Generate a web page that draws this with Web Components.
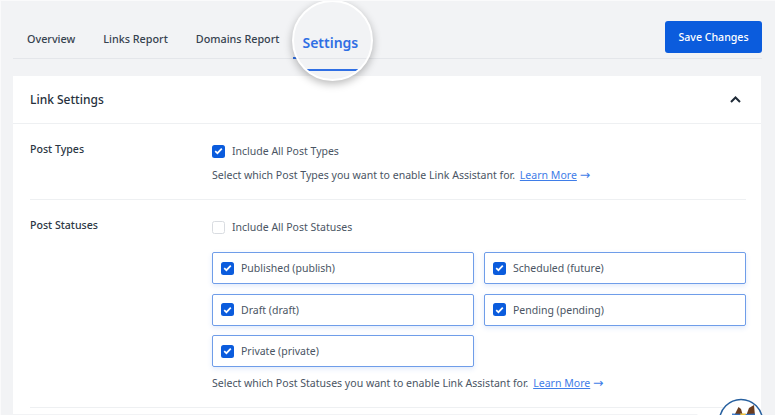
<!DOCTYPE html>
<html>
<head>
<meta charset="utf-8">
<title>Link Assistant Settings</title>
<style>
  html, body { margin: 0; height: 100%; overflow: hidden; }
  body {
    background: #f2f3f5;
    font-family: "Noto Sans", "Open Sans", sans-serif;
    color: #3c4858;
  }
</style>
</head>
<body>
<la-page>
  <la-tabs slot="tabs">
    <la-tab>Overview</la-tab>
    <la-tab>Links Report</la-tab>
    <la-tab>Domains Report</la-tab>
    <la-tab active><la-lens>Settings</la-lens></la-tab>
    <la-button slot="action">Save Changes</la-button>
  </la-tabs>
  <la-card heading="Link Settings">
    <la-row label="Post Types">
      <la-check checked>Include All Post Types</la-check>
      <la-help type="Post Types"></la-help>
    </la-row>
    <la-row label="Post Statuses">
      <la-check>Include All Post Statuses</la-check>
      <la-options>
        <la-check boxed checked>Published (publish)</la-check>
        <la-check boxed checked>Scheduled (future)</la-check>
        <la-check boxed checked>Draft (draft)</la-check>
        <la-check boxed checked>Pending (pending)</la-check>
        <la-check boxed checked>Private (private)</la-check>
      </la-options>
      <la-help type="Post Statuses"></la-help>
    </la-row>
  </la-card>
  <la-mascot></la-mascot>
</la-page>

<script>
  class LaPage extends HTMLElement {
    connectedCallback() {
      this.attachShadow({ mode: "open" });
      this.shadowRoot.innerHTML = `
        <style>
          :host {
            display: block;
            position: relative;
            width: 775px;
            height: 415px;
            box-sizing: border-box;
            padding: 0 13px 0 12px;
            overflow: hidden;
            border-top: 1px solid #fafafb;
            border-left: 1px solid #fafafb;
          }
        </style>
        <slot name="tabs"></slot>
        <slot></slot>
      `;
    }
  }

  class LaTabs extends HTMLElement {
    connectedCallback() {
      this.attachShadow({ mode: "open" });
      this.shadowRoot.innerHTML = `
        <style>
          :host {
            display: flex;
            align-items: flex-start;
            justify-content: space-between;
            height: 57px;
            margin: 0 0 17px;
            border-bottom: 1px solid #e4e6ea;
          }
          nav { display: flex; align-self: stretch; }
        </style>
        <nav><slot></slot></nav>
        <slot name="action"></slot>
      `;
    }
  }

  class LaTab extends HTMLElement {
    connectedCallback() {
      this.attachShadow({ mode: "open" });
      this.shadowRoot.innerHTML = `
        <style>
          :host {
            display: block;
            position: relative;
            box-sizing: border-box;
            height: 58px;
            padding: 29px 14px 0;
            font-size: 10.8px;
            line-height: 17px;
            font-weight: 500;
            color: #36424f;
            white-space: nowrap;
          }
          :host([active]) {
            width: 70px;
            padding: 0;
            border-bottom: 2px solid #2f6fe4;
          }
        </style>
        <slot></slot>
      `;
    }
  }

  class LaButton extends HTMLElement {
    connectedCallback() {
      this.attachShadow({ mode: "open" });
      this.shadowRoot.innerHTML = `
        <style>
          :host {
            display: flex;
            align-items: center;
            justify-content: center;
            width: 97px;
            height: 32px;
            margin-top: 20px;
            border-radius: 3px;
            background: #0b5cdd;
            color: #fff;
            font-size: 10.6px;
            font-weight: 500;
          }
        </style>
        <slot></slot>
      `;
    }
  }

  class LaCard extends HTMLElement {
    connectedCallback() {
      this.attachShadow({ mode: "open" });
      this.shadowRoot.innerHTML = `
        <style>
          :host {
            display: block;
            background: #fff;
            width: 748px;
            height: 338px;
            overflow: hidden;
          }
          header {
            display: flex;
            align-items: center;
            justify-content: space-between;
            height: 47px;
            padding: 0 20px 0 17px;
            border-bottom: 1px solid #eef0f2;
            font-size: 12px;
            font-weight: 500;
            color: #26303c;
          }
          svg { display: block; }
          .body { padding: 0 15px 0 17px; }
        </style>
        <header>
          <span>${this.getAttribute("heading")}</span>
          <svg width="11" height="7" viewBox="0 0 11 7"><path d="M1 6 5.5 1.5 10 6" fill="none" stroke="#1f2a37" stroke-width="2"/></svg>
        </header>
        <div class="body"><slot></slot></div>
      `;
    }
  }

  class LaRow extends HTMLElement {
    connectedCallback() {
      this.attachShadow({ mode: "open" });
      this.shadowRoot.innerHTML = `
        <style>
          :host {
            display: grid;
            grid-template-columns: 182px 1fr;
            padding: 19px 0 16px;
            border-bottom: 1px solid #eef0f2;
          }
          .label {
            font-size: 10.6px;
            line-height: 12px;
            font-weight: 500;
            color: #2c3744;
          }
          .controls { display: flex; flex-direction: column; }
        </style>
        <div class="label">${this.getAttribute("label")}</div>
        <div class="controls"><slot></slot></div>
      `;
    }
  }

  class LaCheck extends HTMLElement {
    connectedCallback() {
      const checked = this.hasAttribute("checked");
      this.attachShadow({ mode: "open" });
      this.shadowRoot.innerHTML = `
        <style>
          :host {
            display: flex;
            align-items: center;
            gap: 7px;
            height: 16px;
            font-size: 10.5px;
            line-height: 16px;
            color: #4a5564;
            white-space: nowrap;
          }
          :host([boxed]) {
            box-sizing: border-box;
            height: 32px;
            padding-left: 8px;
            border: 1px solid #6f9de9;
            border-radius: 2px;
            box-shadow: 0 2px 5px rgba(70, 125, 230, .16);
          }
          .box {
            box-sizing: border-box;
            width: 13px;
            height: 13px;
            flex: none;
            border-radius: 2.5px;
            display: flex;
            align-items: center;
            justify-content: center;
          }
          .on { background: #0b5cdd; }
          .off { background: #fff; border: 1px solid #d9dce1; }
        </style>
        <span class="box ${checked ? "on" : "off"}">${checked ? `<svg width="9" height="8" viewBox="0 0 9 8"><path d="M1.2 4.2 3.4 6.2 7.8 1.6" fill="none" stroke="#fff" stroke-width="1.7"/></svg>` : ""}</span>
        <span><slot></slot></span>
      `;
    }
  }

  class LaOptions extends HTMLElement {
    connectedCallback() {
      this.attachShadow({ mode: "open" });
      this.shadowRoot.innerHTML = `
        <style>
          :host {
            display: grid;
            grid-template-columns: 262px 262px;
            gap: 9.5px 10px;
            margin-top: 17px;
          }
        </style>
        <slot></slot>
      `;
    }
  }

  class LaHelp extends HTMLElement {
    connectedCallback() {
      this.attachShadow({ mode: "open" });
      this.shadowRoot.innerHTML = `
        <style>
          :host {
            display: block;
            height: 16px;
            margin-top: 8px;
            font-size: 10.55px;
            line-height: 16px;
            color: #4a5564;
            white-space: nowrap;
          }
          a { color: #3f7de8; text-decoration: underline; margin-left: 2px; }
          span { color: #3f7de8; font-family: "DejaVu Sans", sans-serif; font-size: 12.5px; line-height: 1; }
        </style>
        Select which ${this.getAttribute("type")} you want to enable Link Assistant for. <a>Learn More</a> <span>→</span>
      `;
    }
  }

  class LaLens extends HTMLElement {
    connectedCallback() {
      this.attachShadow({ mode: "open" });
      this.shadowRoot.innerHTML = `
        <style>
          :host {
            position: absolute;
            left: -1px;
            top: -1px;
            box-sizing: border-box;
            width: 81px;
            height: 81px;
            border-radius: 50%;
            overflow: hidden;
            background: #f2f3f5;
            border: 2px solid #fff;
            box-shadow: 0 3px 9px rgba(0, 0, 0, .28);
          }
          span {
            position: absolute;
            left: 8px;
            top: 30px;
            font-size: 14px;
            line-height: 22px;
            font-weight: 600;
            color: #2f6fe4;
          }
          i { position: absolute; left: 13px; right: 13px; top: 67px; height: 2px; background: #2f6fe4; }
          b { position: absolute; left: 0; right: 0; top: 56px; height: 1px; background: #e4e6ea; }
        </style>
        <b></b><span><slot></slot></span><i></i>
      `;
    }
  }

  class LaMascot extends HTMLElement {
    connectedCallback() {
      this.attachShadow({ mode: "open" });
      this.shadowRoot.innerHTML = `
        <style>
          :host { position: absolute; left: 696px; top: 397px; display: flex; align-items: flex-end; }
          svg { display: block; }
          i { width: 24px; height: 3px; margin-right: -3px; background: #fff; border-radius: 3px 0 0 0; }
        </style>
        <i></i>
        <svg width="46" height="18" viewBox="0 0 46 18">
          <circle cx="23" cy="23" r="21.5" fill="#fff" stroke="#27609f" stroke-width="1.5"/>
          <path d="M16 18 20.5 9 23 11 25 18Z" fill="#6b3d1f"/>
          <path d="M28 18 31 10 36 7 37 18Z" fill="#6b3d1f"/>
          <path d="M14 15.5 27 16 37 15.5 37 18 14 18Z" fill="#2f72c9" opacity=".9"/>
          <path d="M22 15.5 28 15.5 27 18 23 18Z" fill="#f0c23c"/>
        </svg>
      `;
    }
  }

  customElements.define("la-page", LaPage);
  customElements.define("la-tabs", LaTabs);
  customElements.define("la-tab", LaTab);
  customElements.define("la-button", LaButton);
  customElements.define("la-card", LaCard);
  customElements.define("la-row", LaRow);
  customElements.define("la-check", LaCheck);
  customElements.define("la-options", LaOptions);
  customElements.define("la-help", LaHelp);
  customElements.define("la-lens", LaLens);
  customElements.define("la-mascot", LaMascot);
</script>
</body>
</html>
